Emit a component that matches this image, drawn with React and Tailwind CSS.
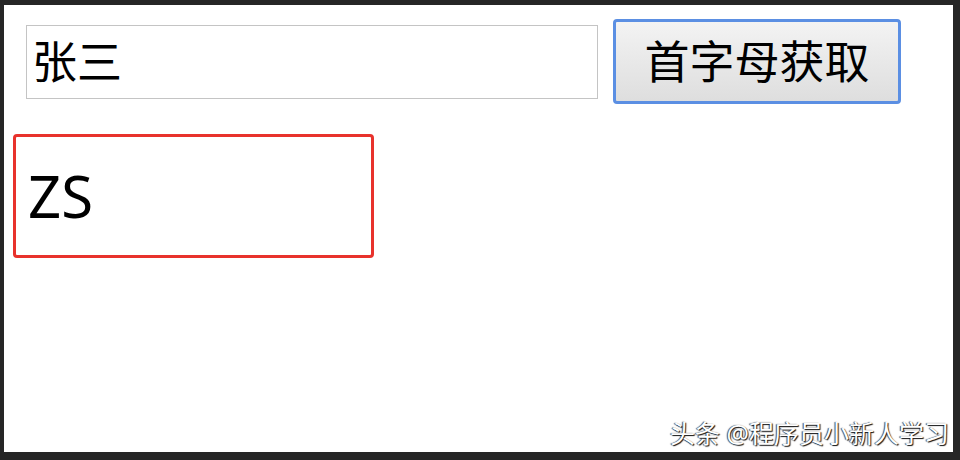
export default function App() {
  return (
    <div className="h-[460px] w-[960px] bg-[#262626] pt-[5px] pl-[4px] pr-[7px] pb-[8px]">
      <div
        className="relative flex h-full flex-col bg-white pl-[9px] pt-[14px]"
        style={{ fontFamily: '"Noto Sans", "Noto Sans CJK SC", sans-serif' }}
      >
        {/* input + button row */}
        <div className="flex items-center gap-[15px] pl-[13px]">
          <div className="flex h-[74px] w-[572px] items-center border border-[#c4c4c4] pl-[5px] text-[45px] leading-none text-black">
            张三
          </div>
          <button className="flex h-[85px] w-[288px] items-center justify-center rounded-[4px] border-[3px] border-[#5b8fe3] bg-gradient-to-b from-[#f3f3f3] to-[#dedede] text-[45px] leading-none text-black">
            首字母获取
          </button>
        </div>

        {/* result box */}
        <div className="mt-[30px] flex h-[124px] w-[361px] items-center rounded-[4px] border-[3px] border-[#e8322c] pl-[12px] text-[58px] leading-none text-black">
          ZS
        </div>

        {/* watermark */}
        <div
          className="absolute right-[4px] bottom-[6px] text-[25px] leading-none text-white"
          style={{ textShadow: '1px 1px 1px #111, -1px 0 1px #444' }}
        >
          头条 @程序员小新人学习
        </div>
      </div>
    </div>
  );
}
